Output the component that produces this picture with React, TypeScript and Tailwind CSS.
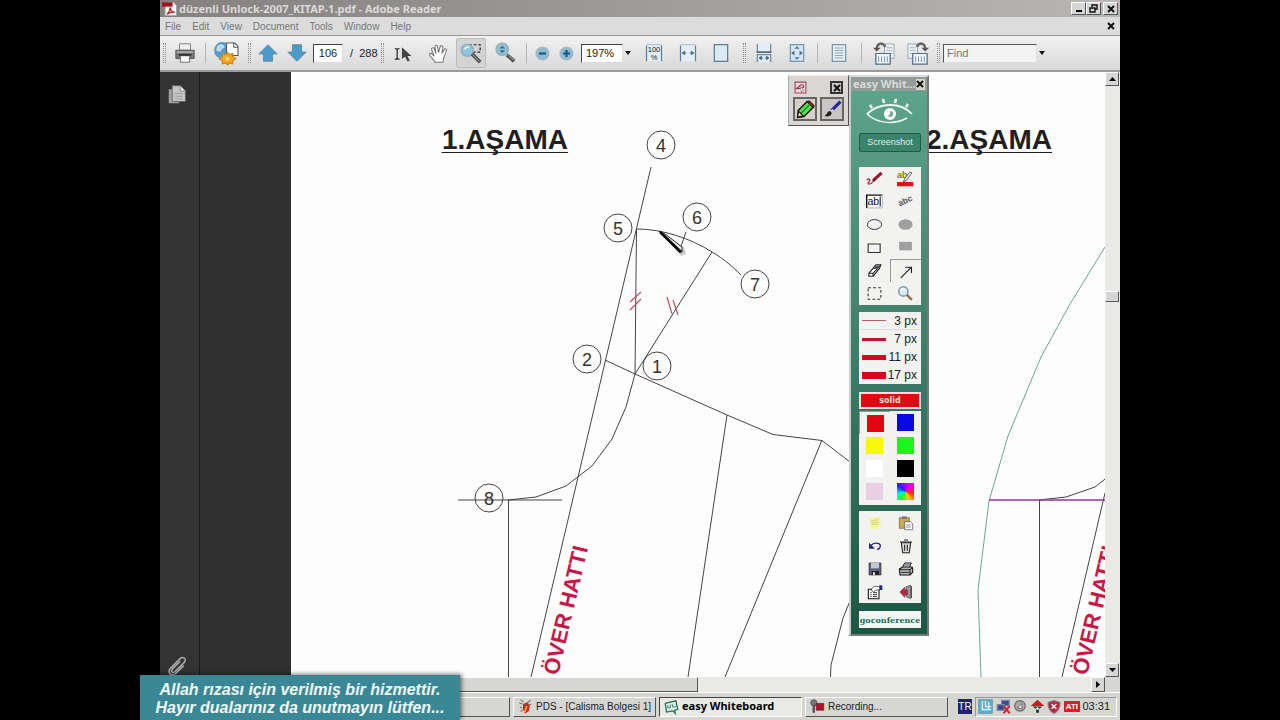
import React, { useState } from "react";

interface IconProps {
  name: string;
  size?: number;
}

const PageShape = () => (
  <>
    <path d="M3 2h18v20H3z" fill="#e3edf5" />
    <path d="M3 3v19M21 3v19" stroke="#5e7f9b" strokeWidth="1.5" />
    <path d="M3 2h18" stroke="#9fb0be" strokeWidth="1" />
  </>
);

const glyphs: Record<string, React.ReactNode> = {
  printer: (
    <>
      <path d="M6 2h12v7H6z" fill="#f2f2f2" stroke="#777" />
      <path d="M2 9h20v9H2z" fill="#777" stroke="#555" />
      <path d="M3 10h18v2H3z" fill="#aaa" />
      <path d="M7 15h10v7H7z" fill="#fff" stroke="#666" />
      <path d="M5 13h14v2H5z" fill="#333" />
    </>
  ),
  globe: (
    <>
      <circle cx="8" cy="9" r="8" fill="#5b9ac6" />
      <path d="M3 5c3-3 6-2 7 0s-3 2-3 4-4 1-5 0z" fill="#b9dcef" />
      <path d="M12 2h8l3 3v9H12z" fill="#fff" stroke="#555" />
      <path d="M19 2v4h4" fill="none" stroke="#555" />
      <path
        d="M13 11l2 2 3-1v3l3 2-3 2v3l-3-1-2 2-2-2-3 1v-3l-3-2 3-2v-3l3 1z"
        fill="#f2a922"
        stroke="#cf7f12"
      />
      <circle cx="13" cy="17" r="2" fill="#ffd56b" />
    </>
  ),
  up: <path d="M12 3l10 10h-5v8H7v-8H2z" fill="#4a9bca" stroke="#5f8ba8" />,
  down: <path d="M12 21L2 11h5V3h10v8h5z" fill="#4a9bca" stroke="#5f8ba8" />,
  cursor: (
    <>
      <path d="M1 6h2l1 1 1-1h2M4 7v11M1 19h2l1-1 1 1h2" fill="none" stroke="#222" strokeWidth="1.5" />
      <path d="M10 4v15l4-3 3 6 3-1-3-6h5z" fill="#444" />
    </>
  ),
  hand: (
    <path
      d="M8 22c-1-3-4-5-6-8-1-2 1-3 3-1l2 2-3-8c0-2 2-2 3-1l2 6-1-8c0-2 3-2 3 0l1 7 2-7c1-2 3-1 3 1l-1 7 3-5c1-1 3 0 2 2l-3 8-1 5z"
      fill="#fff"
      stroke="#777"
      strokeWidth="1.2"
    />
  ),
  marquee: (
    <>
      <path d="M10 3h12v8h-8" fill="none" stroke="#222" strokeWidth="1.3" strokeDasharray="3 2" />
      <circle cx="8" cy="9" r="6.500" fill="#8fc6da" stroke="#94b3c0" strokeWidth="2" />
      <path d="M5 8c1-2 3-3 5-2" fill="none" stroke="#e2f4fb" strokeWidth="2" />
      <path d="M13 13l9 9" stroke="#555" strokeWidth="4" />
      <path d="M14 14l7 7" stroke="#aaa" strokeWidth="1" />
    </>
  ),
  zoom: (
    <>
      <circle cx="9" cy="8" r="6.500" fill="#8fc0d6" stroke="#94b3c0" strokeWidth="2" />
      <path d="M6 7l3-3 3 3M6 9l3 3 3-3" fill="#376e8e" />
      <path d="M14 14l8 7" stroke="#555" strokeWidth="4" />
      <path d="M15 14l7 6" stroke="#aaa" strokeWidth="1" />
    </>
  ),
  minus: (
    <>
      <circle cx="12" cy="12" r="9" fill="#8bbbd5" stroke="#aab8c0" strokeWidth="2" />
      <path d="M7 12h10" stroke="#1f5378" strokeWidth="3" />
    </>
  ),
  plus: (
    <>
      <circle cx="12" cy="12" r="9" fill="#8bbbd5" stroke="#aab8c0" strokeWidth="2" />
      <path d="M7 12h10M12 7v10" stroke="#1f5378" strokeWidth="3" />
    </>
  ),
  percent: (
    <>
      <PageShape />
      <text x="12" y="11" textAnchor="middle" fontSize="9" fill="#222">100</text>
      <text x="12" y="20" textAnchor="middle" fontSize="9" fill="#222">%</text>
    </>
  ),
  width: (
    <>
      <PageShape />
      <path d="M5 12l3-2v4zM19 12l-3-2v4zM8 12h2M14 12h2" fill="#4c6377" stroke="#4c6377" />
    </>
  ),
  page: <path d="M4 2h16v20H4z" fill="#dceaf4" stroke="#5f7b91" strokeWidth="1.500" />,
  scroll: (
    <>
      <path d="M4 1v10h16V1" fill="#e3edf5" stroke="#7a8c9a" strokeWidth="1.5" />
      <path d="M4 23V14h16v9" fill="#e3edf5" stroke="#7a8c9a" strokeWidth="1.5" />
      <path d="M3 11h18" stroke="#4f6f8a" strokeWidth="2" />
      <path d="M6 18l3-2v4zM18 18l-3-2v4zM9 18h2M13 18h2" fill="#41678a" stroke="#41678a" />
    </>
  ),
  fit: (
    <>
      <path d="M4 2h16v20H4z" fill="#d3e6f3" stroke="#7798b1" strokeWidth="1.5" />
      <path d="M12 4l3 3H9zM12 20l3-3H9zM5 12l4-3v6zM19 12l-4-3v6z" fill="#4c6f8c" />
    </>
  ),
  doc: (
    <>
      <path d="M4 2h16v20H4z" fill="#e6eff6" stroke="#7798b1" strokeWidth="1.5" />
      <path d="M7 6h10M7 9h10M7 12h10M7 15h10M7 18h10" stroke="#8498a8" />
    </>
  ),
  rotateLeft: (
    <>
      <path d="M13 2h10v15H13z" fill="#edf1f5" stroke="#9aa6b1" />
      <path d="M15 6h6M15 9h6M15 12h6" stroke="#a5b0ba" />
      <path d="M4 12h15v11H4z" fill="#f0f5fa" stroke="#4e6c86" strokeWidth="1.3" />
      <path d="M7 15v6M10 15v6M13 15v6M16 15v6" stroke="#7f95a9" />
      <path d="M14 5C10-1 5 2 5 7" fill="none" stroke="#666" strokeWidth="2.5" />
      <path d="M1 6h8l-4 4z" fill="#555" />
    </>
  ),
  rotateRight: (
    <>
      <path d="M1 2h10v15H1z" fill="#edf1f5" stroke="#9aa6b1" />
      <path d="M3 6h6M3 9h6M3 12h6" stroke="#a5b0ba" />
      <path d="M6 12h15v11H6z" fill="#f0f5fa" stroke="#4e6c86" strokeWidth="1.3" />
      <path d="M9 15v6M12 15v6M15 15v6M18 15v6" stroke="#7f95a9" />
      <path d="M10 5c4-6 9-3 9 2" fill="none" stroke="#666" strokeWidth="2.5" />
      <path d="M23 6h-8l4 4z" fill="#555" />
    </>
  ),
  pdf: (
    <>
      <path d="M5 2h13l5 5v16H5z" fill="#fff" stroke="#999" />
      <path d="M0 2h17v7H0z" fill="#a4101c" />
      <path d="M8 21c3-3 5-7 5-11 0 5 3 8 8 8-5-1-9 0-13 3z" fill="none" stroke="#b8202b" strokeWidth="2" />
    </>
  ),
  pages: (
    <>
      <path d="M2 6h12v16H2z" fill="#a0a0a0" />
      <path d="M6 2h9l6 6v12H6z" fill="#c6c6c6" stroke="#666" />
      <path d="M15 2v6h6" fill="#e5e5e5" stroke="#888" />
      <path d="M9 11h9M9 14h9M9 17h9" stroke="#999" />
    </>
  ),
  clip: (
    <path
      d="M15 6L6 15c-2 3 1 5 3 3l11-11c3-4-2-7-5-4L4 14c-4 5 1 10 6 6l9-9"
      fill="none"
      stroke="#a8a8a8"
      strokeWidth="1.8"
    />
  ),
  greenPencil: (
    <>
      <path d="M2 22l1-9L14 2l8 7-12 12z" fill="#54e052" stroke="#111" strokeWidth="1.8" />
      <path d="M14 2l3-1 6 6-1 3z" fill="#b01717" stroke="#111" />
      <path d="M6 17L18 5" stroke="#138a1e" strokeWidth="1.5" />
      <path d="M2 22l1-8 6 6z" fill="#f4e28b" stroke="#111" strokeWidth="1.5" />
    </>
  ),
  bluePen: (
    <>
      <path d="M22 2L11 13" stroke="#27279b" strokeWidth="4" />
      <path d="M12 11l-4 4 2 2 4-4z" fill="#ccc" />
      <path d="M9 14c-4 0-3 4-7 6 4 2 9 0 9-4z" fill="#222" />
    </>
  ),
  record: (
    <>
      <path d="M2 2h20v20H2z" fill="#f3dce1" stroke="#a64157" strokeWidth="2" />
      <path d="M3 14c6 0 6-7 11-7s5 5 1 6-6 2-9 1" fill="none" stroke="#9c2440" strokeWidth="2" />
      <path d="M11 10l8 8-4 0-1 3z" fill="#fff" stroke="#555" />
    </>
  ),
  redPen: (
    <>
      <path d="M1 14c4-3 6 0 3 3s0 4 5 1" fill="none" stroke="#b5213a" strokeWidth="1.8" />
      <path d="M22 4L10 15" stroke="#9c1830" strokeWidth="4.500" />
      <path d="M11 12l-3 6 5-3z" fill="#621020" />
    </>
  ),
  highlighter: (
    <>
      <text x="0" y="11" fontSize="13" fontWeight="bold" fill="#7f7f08">ab</text>
      <path d="M21 4l-8 11-4 2 2-5 7-9z" fill="#eee" stroke="#333" />
      <path d="M0 17h23v6H0z" fill="#df1119" />
    </>
  ),
  textBox: (
    <>
      <path d="M1 3h22v18H1z" fill="#fff" />
      <path d="M1 21V3h22" fill="none" stroke="#111" strokeWidth="2" />
      <path d="M1 21h22V3" fill="none" stroke="#999" />
      <text x="2" y="17" fontSize="15" fill="#111">ab</text>
      <path d="M20 5v14" stroke="#111" strokeWidth="1.5" />
    </>
  ),
  abc: (
    <text x="12" y="15" textAnchor="middle" fontSize="12" fontWeight="bold" fill="#555" transform="rotate(-25 12 12)">
      abc
    </text>
  ),
  ellipse: <ellipse cx="12" cy="12" rx="10" ry="7" fill="none" stroke="#333" strokeWidth="1.4" />,
  ellipseFill: <ellipse cx="12" cy="12" rx="10" ry="7.500" fill="#a0a0a0" />,
  rect: <path d="M3 7h17v12H3z" fill="none" stroke="#333" strokeWidth="1.6" />,
  rectFill: <path d="M3 4h18v12H3z" fill="#a0a0a0" />,
  eraser: (
    <>
      <path d="M4 16L14 4h7l-2 5-9 11H4z" fill="#fff" stroke="#222" strokeWidth="1.5" />
      <path d="M4 16h6l11-12M10 16v4" fill="none" stroke="#222" strokeWidth="1.5" />
      <path d="M10 10h6l4-5h-6z" fill="#555" />
    </>
  ),
  arrow: <path d="M4 21L18 7M10 6h9v8" fill="none" stroke="#222" strokeWidth="1.6" />,
  select: <path d="M3 4h18v16H3z" fill="none" stroke="#333" strokeWidth="1.5" strokeDasharray="4 3" />,
  magnifier: (
    <>
      <circle cx="9" cy="9" r="6.500" fill="#d7ebf7" stroke="#7a93a7" strokeWidth="2" />
      <path d="M5 8c1-3 4-4 6-2" fill="none" stroke="#fff" strokeWidth="2" />
      <path d="M14 14l7 7" stroke="#97713e" strokeWidth="3.5" />
    </>
  ),
  note: (
    <>
      <path d="M3 5l16-3 2 17-15 3z" fill="#f5f3a5" />
      <path d="M6 9l11-2M7 12l11-2M7 15l11-2" stroke="#cdc968" strokeWidth="1.2" />
    </>
  ),
  paste: (
    <>
      <path d="M2 4h15v16H2z" fill="#c9a94e" stroke="#77602a" />
      <path d="M6 2h7v4H6z" fill="#777" />
      <path d="M10 10h9l3 3v9H10z" fill="#fff" stroke="#445" />
      <path d="M12 15h7M12 18h7" stroke="#557" />
    </>
  ),
  undo: (
    <>
      <path d="M6 11c4-5 13-4 14 0 0 4-2 6-5 6" fill="none" stroke="#26267e" strokeWidth="2" />
      <path d="M3 7v9h9z" fill="#26267e" />
    </>
  ),
  trash: (
    <>
      <path d="M5 7h14l-2 15H7z" fill="#ddd" stroke="#222" strokeWidth="1.6" />
      <path d="M3 6h18M9 3h6M10 10v9M14 10v9" stroke="#222" strokeWidth="1.6" />
    </>
  ),
  disk: (
    <>
      <path d="M3 3h18v18H3z" fill="#605f82" stroke="#333" />
      <path d="M6 3h12v8H6z" fill="#c3c7cf" />
      <path d="M7 15h11v6H7z" fill="#222" />
      <path d="M9 17h3v4H9z" fill="#ddd" />
    </>
  ),
  print: (
    <>
      <path d="M7 9l3-6h10l-3 6" fill="#fff" stroke="#111" strokeWidth="1.5" />
      <path d="M2 12l5-3h14l1 3v5l-4 4H3z" fill="#bbb" stroke="#111" strokeWidth="1.6" />
      <path d="M3 13h15l4-3M4 17h14M18 13v8" fill="none" stroke="#111" strokeWidth="1.3" />
      <path d="M10 5h8M9 7h8" stroke="#444" />
    </>
  ),
  properties: (
    <>
      <path d="M2 8h16v14H2z" fill="#fff" stroke="#111" strokeWidth="1.6" />
      <path d="M5 13h2M9 13h6M5 16h2M9 16h6M5 19h2M9 19h6" stroke="#333" strokeWidth="1.5" />
      <path d="M6 9c3-6 7-6 10-5l3-1v6h-6l-3 3z" fill="#fff" stroke="#111" />
      <path d="M19 2h4v7h-4z" fill="#26267e" />
    </>
  ),
  exit: (
    <>
      <path d="M12 4l7-2v20l-7-3z" fill="#999" stroke="#444" />
      <path d="M19 3h2v18h-2z" fill="#555" />
      <path d="M3 12l7-7v4h4v7h-4v4z" fill="#b52b43" stroke="#8b1a30" />
    </>
  ),
  pds: (
    <>
      <path d="M8 8l7-3 4 6-2 9-6 3-3-7z" fill="#cf2326" />
      <path d="M14 11l-3 10" fill="none" stroke="#f0c735" strokeWidth="2.500" />
      <path d="M4 1l5 4M20 2l-5 4M2 6l5 2M3 13l4 1M21 8l-3 2M4 20l4-3" stroke="#6a7f6a" strokeWidth="1.800" />
    </>
  ),
  board: (
    <>
      <path d="M2 7l17-4 3 14-5 1 1 5-4-4-10 2z" fill="#d9efe6" stroke="#2d6a56" strokeWidth="2" />
      <path d="M6 10v4h4v-5M13 8l1 5 5-1" fill="none" stroke="#3d816a" strokeWidth="1.5" />
    </>
  ),
  recording: (
    <>
      <circle cx="6" cy="6" r="5" fill="#777" stroke="#333" />
      <path d="M4 9h4v13H4z" fill="#555" />
      <path d="M10 7h12v11H10z" fill="#b1122b" stroke="#7e0c1d" />
    </>
  ),
  trayGrid: (
    <>
      <path d="M1 1h22v22H1z" fill="#62aecb" stroke="#4788a3" />
      <path d="M7 3v14h14M12 3v9h9M17 5v12" fill="none" stroke="#e5f6fc" strokeWidth="2" />
    </>
  ),
  trayNet: (
    <>
      <path d="M9 2h12v9H9z" fill="#3f4b87" stroke="#7b84ad" strokeWidth="2" />
      <path d="M2 9h11v9H2z" fill="#3f4b87" stroke="#7b84ad" strokeWidth="2" />
      <path d="M12 11l10 12M22 11L12 23" stroke="#d31f35" strokeWidth="3" />
    </>
  ),
  trayVolume: (
    <>
      <circle cx="12" cy="10" r="9" fill="#a8a8a8" stroke="#666" strokeWidth="2" />
      <path d="M8 13l7-7v9z" fill="#eee" stroke="#444" />
    </>
  ),
  trayUmbrella: (
    <>
      <path d="M1 11L12 1l11 10z" fill="#ce1b21" />
      <path d="M4 12h16l-6 4v6h-4v-6z" fill="#252525" />
      <circle cx="12" cy="15" r="2" fill="#fff" />
    </>
  ),
  trayShield: (
    <>
      <path d="M2 4l10-3 10 3c1 9-4 16-10 19C6 20 1 13 2 4z" fill="#b6243e" stroke="#8d7780" strokeWidth="2" />
      <path d="M8 7l8 8M16 7l-8 8" stroke="#fff" strokeWidth="2.500" />
    </>
  ),
};

const Icon = ({ name, size = 18 }: IconProps) => (
  <svg viewBox="0 0 24 24" width={size} height={size} className="shrink-0 overflow-visible" aria-hidden="true">
    {glyphs[name]}
  </svg>
);

const ToolButton = ({
  name,
  label,
  className,
  size = 22,
}: {
  name: string;
  label: string;
  className: string;
  size?: number;
}) => (
  <button aria-label={label} className={`flex h-[30px] shrink-0 items-center justify-center ${className}`}>
    <Icon name={name} size={size} />
  </button>
);

const Grip = () => (
  <div className="flex w-2 shrink-0 justify-center">
    <div className="h-5 w-[3px] border-x border-dotted border-[#8d8d8d]" />
  </div>
);

const Divider = () => (
  <div className="flex w-[6px] shrink-0 justify-center">
    <div className="h-5 w-px bg-[#b5b5b5]" />
  </div>
);

const DropArrow = ({ label }: { label: string }) => (
  <button aria-label={label} className="flex h-5 w-[10px] shrink-0 items-center justify-center">
    <svg width="6" height="4" viewBox="0 0 6 4" aria-hidden="true">
      <path d="M0 0h6L3 4z" fill="#111" />
    </svg>
  </button>
);

const CloseMark = () => (
  <svg width="8" height="8" viewBox="0 0 8 8" aria-hidden="true">
    <path d="M1 1l6 6M7 1L1 7" stroke="#111" strokeWidth="2" />
  </svg>
);

const raised = "border border-t-white border-l-white border-r-[#555] border-b-[#555] bg-[#d6d6d4]";
const sunken = "border border-t-[#444] border-l-[#444] border-r-[#ddd] border-b-[#ddd] bg-white";

const TitleBar = () => (
  <header className="flex h-[17px] shrink-0 items-center bg-linear-to-r from-[#858181] to-[#bab6b6] pr-[2px] pl-[2px]">
    <Icon name="pdf" size={15} />
    <h1 className="ml-[2px] flex-1 font-['Noto_Sans',sans-serif] text-[11px] leading-4 font-bold text-[#dcd9d9]">
      düzenli Unlock-2007_KITAP-1.pdf - Adobe Reader
    </h1>
    <button aria-label="Minimize" className={`flex h-[13px] w-[15px] items-end justify-center pb-[2px] ${raised}`}>
      <span className="h-[2px] w-[6px] bg-black" />
    </button>
    <button aria-label="Restore" className={`flex h-[13px] w-[15px] items-center justify-center ${raised}`}>
      <svg width="9" height="9" viewBox="0 0 9 9" aria-hidden="true">
        <path d="M3 3V1h5v4H6M1 4h5v4H1zM3 1h5M1 4h5" fill="none" stroke="#111" strokeWidth="1.4" />
      </svg>
    </button>
    <button aria-label="Close" className={`ml-[2px] flex h-[13px] w-[15px] items-center justify-center ${raised}`}>
      <CloseMark />
    </button>
  </header>
);

const menus = ["File", "Edit", "View", "Document", "Tools", "Window", "Help"];

const MenuBar = () => (
  <nav className="flex h-[19px] shrink-0 items-center gap-[11px] border-b border-[#999] bg-[#dcdcdc] pr-[5px] pl-[5px] text-[10px] text-[#777]">
    {menus.map((m) => (
      <button key={m}>{m}</button>
    ))}
    <button aria-label="Close document" className="ml-auto">
      <CloseMark />
    </button>
  </nav>
);

const Toolbar = () => {
  const [page, setPage] = useState("106");
  const [zoom, setZoom] = useState("197%");

  return (
    <div className="flex h-9 shrink-0 items-center overflow-hidden border-b-2 border-[#9b9b9b] bg-linear-to-b from-[#f1f1f1] to-[#d9d9d9] text-[11px] text-[#222]">
      <Grip />
      <ToolButton name="printer" label="Print" className="w-[34px]" />
      <Divider />
      <ToolButton name="globe" label="Collaborate" className="w-[37px]" size={25} />
      <Grip />
      <ToolButton name="up" label="Previous page" className="w-[30px]" />
      <ToolButton name="down" label="Next page" className="w-[27px]" />
      <input
        aria-label="Page"
        value={page}
        onChange={(e) => setPage(e.target.value)}
        className={`ml-[3px] h-[19px] w-[30px] shrink-0 text-center ${sunken}`}
      />
      <span className="w-[35px] shrink-0 pl-[7px] whitespace-pre">/  288</span>
      <Grip />
      <ToolButton name="cursor" label="Select" className="w-[34px]" size={19} />
      <ToolButton name="hand" label="Hand" className="w-9" size={21} />
      <ToolButton
        name="marquee"
        label="Marquee zoom"
        className="w-[30px] rounded-[2px] border border-[#bdbdbd] bg-[#d4d4d4]"
      />
      <ToolButton name="zoom" label="Dynamic zoom" className="w-[37px]" />
      <Divider />
      <ToolButton name="minus" label="Zoom out" className="w-[26px]" size={17} />
      <ToolButton name="plus" label="Zoom in" className="w-[22px]" size={17} />
      <input
        aria-label="Zoom"
        value={zoom}
        onChange={(e) => setZoom(e.target.value)}
        className={`ml-1 h-[19px] w-[42px] shrink-0 pl-1 ${sunken}`}
      />
      <DropArrow label="Zoom levels" />
      <ToolButton name="percent" label="Actual size" className="w-[42px]" size={20} />
      <ToolButton name="width" label="Fit width" className="w-[26px]" size={20} />
      <ToolButton name="page" label="Single page" className="w-[39px]" size={20} />
      <Grip />
      <ToolButton name="scroll" label="Scrolling" className="w-[32px]" size={20} />
      <ToolButton name="fit" label="Fit page" className="w-[34px]" size={20} />
      <Divider />
      <ToolButton name="doc" label="Reading" className="w-[38px]" size={20} />
      <Divider />
      <ToolButton name="rotateLeft" label="Rotate left" className="w-[38px]" size={23} />
      <ToolButton name="rotateRight" label="Rotate right" className="w-8" size={23} />
      <Grip />
      <input
        aria-label="Find"
        placeholder="Find"
        className="ml-px h-[19px] w-[94px] shrink-0 border border-t-[#555] border-r-[#ddd] border-b-[#ddd] border-l-[#555] bg-[#f3f3f3] pl-[3px] placeholder:text-[#777]"
      />
      <DropArrow label="Find options" />
    </div>
  );
};

const points = [
  { n: 4, x: 661, y: 145 },
  { n: 5, x: 618, y: 228 },
  { n: 6, x: 697, y: 217 },
  { n: 7, x: 755, y: 284 },
  { n: 2, x: 587, y: 359 },
  { n: 1, x: 657, y: 366 },
  { n: 8, x: 489, y: 498 },
];

const Pattern = () => (
  <svg
    viewBox="291 72 814 605"
    preserveAspectRatio="xMinYMin slice"
    className="absolute inset-0 h-full w-full font-['Liberation_Sans',Arial,sans-serif]"
  >
    <g fontSize="28" fontWeight="bold" fill="#231f20">
      <text x="442" y="149">1.AŞAMA</text>
      <text x="926" y="149">2.AŞAMA</text>
      <path d="M441.500 152.500H568M925 152.500H1052" stroke="#231f20" />
    </g>
    <g fill="none" stroke="#444">
      <path d="M651 167L531 677" />
      <path d="M636.500 229L635 374L712 252" />
      <path d="M637 229C662 229 690 238 712 252C724 259 733 267 741 275" />
      <path d="M605 360L635 374L727 415L773 434.500L822 440.500L850 462" />
      <path d="M635 374L626 407L612 439L592 466L566 486L536 497L508 500" />
      <path d="M458 500H562M508.500 500V677" />
      <path d="M727 415L688 677M822 440L725 677" />
      <path d="M850 601L843 618L831 665L830.500 677" />
      <path d="M1039.500 500V677M1039 500L1066 497L1095 487L1105 479" />
      <path d="M1105 493L1062 677" />
      <path d="M686 232L681 246" />
    </g>
    <path d="M1105 247L1070 304L1041 357L1008 436L989 501L978 590L981 677" fill="none" stroke="#6fa398" />
    <path d="M989 500H1105" stroke="#93369a" strokeWidth="1.500" />
    <path
      d="M630 302L641 292M630 310L641 299M667 297L672 314M673 300L678 315"
      stroke="#c0506a"
      strokeWidth="1.200"
    />
    <g fontSize="22" fontWeight="bold" fill="#cb1645">
      <text transform="translate(558 676) rotate(-76.800)">ÖVER HATTI</text>
      <text transform="translate(1087 676) rotate(-76.800)">ÖVER HATTI</text>
    </g>
    {points.map((p) => (
      <g key={p.n}>
        <circle cx={p.x} cy={p.y} r="14" fill="none" stroke="#444" />
        <text x={p.x} y={p.y + 7} textAnchor="middle" fontSize="18" fill="#333">
          {p.n}
        </text>
      </g>
    ))}
    {/* pen cursor */}
    <path d="M661 234L684 247L686 254L681 256Z" fill="#ccc" />
    <path d="M659 231L665 234L682 247V252H679Z" fill="#eee" stroke="#222" />
    <path d="M660 232L681 252" stroke="#000" strokeWidth="2.500" />
  </svg>
);

const VerticalScroll = () => (
  <div className="flex w-[15px] shrink-0 flex-col items-stretch bg-[#e9e9e7] pr-px">
    <button aria-label="Scroll up" className={`flex h-[14px] items-center justify-center ${raised}`}>
      <svg width="7" height="4" viewBox="0 0 7 4" aria-hidden="true">
        <path d="M0 4h7L3.500 0z" />
      </svg>
    </button>
    <div className="flex-[205]" />
    <div className={`h-[11px] ${raised}`} />
    <div className="flex-[361]" />
    <button aria-label="Scroll down" className={`flex h-[14px] items-center justify-center ${raised}`}>
      <svg width="7" height="4" viewBox="0 0 7 4" aria-hidden="true">
        <path d="M0 0h7L3.500 4z" />
      </svg>
    </button>
  </div>
);

const MiniToolbar = () => (
  <div className="absolute top-[3px] left-[628px] w-[61px] border border-t-[#eee] border-r-[#555] border-b-[#555] border-l-[#aaa] bg-[#dad6d3] px-1 pt-[5px] pb-1">
    <div className="mb-[3px] flex items-center justify-between px-px">
      <Icon name="record" size={13} />
      <button
        aria-label="Close tools"
        className="flex h-[13px] w-[13px] items-center justify-center border-2 border-[#333] bg-[#c8c8c8]"
      >
        <CloseMark />
      </button>
    </div>
    <div className="flex justify-between">
      <button aria-label="Marker" className="flex h-6 w-6 items-center justify-center border-2 border-[#666] bg-[#d6cfc9]">
        <Icon name="greenPencil" size={19} />
      </button>
      <button aria-label="Brush" className="flex h-6 w-6 items-center justify-center border-2 border-[#666] bg-[#c9c5c3]">
        <Icon name="bluePen" size={19} />
      </button>
    </div>
  </div>
);

const drawTools = [
  "redPen", "highlighter", "textBox", "abc", "ellipse", "ellipseFill",
  "rect", "rectFill", "eraser", "arrow", "select", "magnifier",
];
const actions = ["note", "paste", "undo", "trash", "disk", "print", "properties", "exit"];
const widths = [
  { label: "3 px", bar: "h-px bg-[#b5606c]" },
  { label: "7 px", bar: "h-[3px] bg-[#c8102e]" },
  { label: "11 px", bar: "h-[5px] bg-[#d3091f]" },
  { label: "17 px", bar: "h-[7px] bg-[#d3091f]" },
];
const colors = [
  "bg-[#e3050f]", "bg-[#0a0ae0]", "bg-[#f8f80a]", "bg-[#1cf51c]",
  "bg-white", "bg-black", "bg-[#e8cfe4]",
  "bg-[conic-gradient(#a0f,#f0c,#f22,#fc0,#2f2,#0ef,#22f,#a0f)]",
];

const EasyWhiteboard = () => {
  const [tool, setTool] = useState("arrow");
  const [color, setColor] = useState(0);
  const [width, setWidth] = useState(0);

  return (
    <section className="absolute top-[3px] left-[689px] w-20 border-2 border-t-[#ddd] border-r-[#777] border-b-[#777] border-l-[#ccc] bg-linear-to-b from-[#5fa58e] to-[#1c5746] pb-[6px]">
      <div className="flex h-[14px] items-center justify-between bg-[#929b97] pr-[3px] pl-[2px]">
        <h2 className="font-['Noto_Sans',sans-serif] text-[11px] leading-[14px] font-bold whitespace-nowrap text-[#d5dcd8]">
          easy Whit...
        </h2>
        <button
          aria-label="Close whiteboard"
          className="flex h-[11px] w-[9px] shrink-0 items-center justify-center bg-[#d6d6c8]"
        >
          <CloseMark />
        </button>
      </div>
      <div className="flex flex-col pr-[6px] pl-2">
        <svg viewBox="0 0 48 28" className="mx-auto mt-[7px] h-7 w-12" aria-hidden="true">
          <path d="M1 16C12 5 34 3 46 16" fill="none" stroke="#eefaf5" strokeWidth="1.800" />
          <path d="M1 16C13 27 30 26 41 20" fill="none" stroke="#eefaf5" strokeWidth="1.500" />
          <circle cx="24" cy="16" r="6" fill="#fff" />
          <path d="M24 13a3 3 0 1 1-2 5l2-2z" fill="#75a996" />
          <path d="M4 7l2 3M17 1l1 4M30 1l-1 4M42 6l-2 3" stroke="#fff" strokeWidth="2.500" />
        </svg>
        <button className="mt-[7px] h-[19px] rounded-[2px] border border-[#1f5a49] bg-[#3b826b] text-[9px] leading-none text-[#dcefe7]">
          Screenshot
        </button>
        <div className="mt-[15px] grid grid-cols-2 bg-[#f2f2f1]">
          {drawTools.map((t) => (
            <button
              key={t}
              aria-label={t}
              onClick={() => setTool(t)}
              className={`flex h-[23px] items-center justify-center ${
                tool === t ? "border-t border-l border-[#999]" : ""
              }`}
            >
              <Icon name={t} size={17} />
            </button>
          ))}
        </div>
        <div className="mt-[7px] bg-[#f2f2f1] text-[12px] text-[#222]">
          {widths.map((w, i) => (
            <button
              key={w.label}
              onClick={() => setWidth(i)}
              className={`flex h-[18px] w-full items-center justify-between pr-1 pl-[3px] whitespace-nowrap ${
                width === i ? "border-b border-[#ddd]" : ""
              }`}
            >
              <span className={`w-6 shrink-0 ${w.bar}`} />
              {w.label}
            </button>
          ))}
        </div>
        <button className="mt-2 h-[17px] border-2 border-[#f3e3dc] bg-[#df0a14] font-['DejaVu_Sans',sans-serif] text-[8px] leading-none font-bold text-[#f9dcdc]">
          solid
        </button>
        <div className="mt-[2px] grid grid-cols-2 bg-[#f2f2f1] pb-[2px]">
          {colors.map((c, i) => (
            <button
              key={c}
              aria-label={`Color ${i + 1}`}
              onClick={() => setColor(i)}
              className={`flex h-[23px] items-center justify-center ${
                color === i ? "border-t border-l border-[#999]" : ""
              }`}
            >
              <span className={`h-[17px] w-[17px] ${c}`} />
            </button>
          ))}
        </div>
        <div className="mt-[6px] grid grid-cols-2 bg-[#f2f2f1]">
          {actions.map((a) => (
            <button key={a} aria-label={a} className="flex h-[23px] items-center justify-center">
              <Icon name={a} size={16} />
            </button>
          ))}
        </div>
        <a
          href="#goconference"
          className="mt-2 flex h-[17px] items-center justify-center bg-[#f2f5f3] font-['DejaVu_Serif',serif] text-[8px] font-bold text-[#1f6b52]"
        >
          goconference
        </a>
      </div>
    </section>
  );
};

const HorizontalScroll = () => (
  <div className="flex h-[15px] shrink-0 bg-[#e9e9e5]">
    <div className={`flex-[537] ${raised}`} />
    <div className="flex-[394]" />
    <button aria-label="Scroll right" className={`flex w-[14px] items-center justify-center ${raised}`}>
      <svg width="4" height="7" viewBox="0 0 4 7" aria-hidden="true">
        <path d="M0 0v7l4-3.500z" />
      </svg>
    </button>
    <div className="w-[15px] bg-[#d6d6d4]" />
  </div>
);

const TaskBar = () => (
  <footer className="flex h-7 shrink-0 items-center gap-[3px] border-t border-white bg-[#d6d6d0] pr-[3px] text-[10px] text-[#222]">
    <button aria-label="Adobe Reader" className={`h-5 w-[350px] ${raised}`} />
    <button className={`flex h-5 w-[143px] items-center gap-[3px] px-1 whitespace-nowrap ${raised}`}>
      <Icon name="pds" size={15} />
      PDS - [Calisma Bolgesi 1]
    </button>
    <button className="flex h-5 w-[143px] items-center gap-[3px] border border-t-[#444] border-r-white border-b-white border-l-[#444] bg-[#e9e9e5] px-1 font-['Noto_Sans',sans-serif] text-[11px] font-bold whitespace-nowrap text-black">
      <Icon name="board" size={15} />
      easy Whiteboard
    </button>
    <button className={`flex h-5 w-[143px] items-center gap-[3px] px-1 whitespace-nowrap ${raised}`}>
      <Icon name="recording" size={15} />
      Recording...
    </button>
    <div className="ml-auto flex h-[15px] w-[14px] shrink-0 items-center justify-center bg-[#1c2370] text-white">
      TR
    </div>
    <div className="flex h-5 w-[142px] shrink-0 items-center justify-between border border-t-[#999] border-r-white border-b-white border-l-[#999] pr-[6px] pl-[2px]">
      <Icon name="trayGrid" size={15} />
      <Icon name="trayNet" size={15} />
      <Icon name="trayVolume" size={14} />
      <Icon name="trayUmbrella" size={15} />
      <Icon name="trayShield" size={14} />
      <span className="flex h-[11px] w-4 items-center justify-center bg-[#d8202b] text-[8px] font-bold text-white">
        ATI
      </span>
      <time className="text-[11px]">03:31</time>
    </div>
  </footer>
);

const App: React.FC = () => {
  return (
    <div className="relative h-screen overflow-hidden bg-black px-40 font-['Liberation_Sans',Arial,sans-serif]">
      <div className="flex h-full flex-col">
        <TitleBar />
        <MenuBar />
        <Toolbar />
        <main className="relative flex min-h-0 flex-1">
          <aside className="flex w-10 shrink-0 flex-col items-center justify-between border-r border-[#1b1b1b] bg-[#333] pt-3 pr-[5px]">
            <button aria-label="Pages">
              <Icon name="pages" size={21} />
            </button>
            <button aria-label="Attachments">
              <Icon name="clip" size={21} />
            </button>
          </aside>
          <div className="w-[91px] shrink-0 bg-[#303030]" />
          <article className="relative flex-1 overflow-hidden bg-[#fdfdfd]">
            <Pattern />
          </article>
          <VerticalScroll />
          <MiniToolbar />
          <EasyWhiteboard />
        </main>
        <HorizontalScroll />
        <TaskBar />
      </div>
      <p className="absolute bottom-0 left-[140px] w-80 bg-[#3a8796] pt-[6px] pb-[3px] text-center text-[16px] leading-[18px] font-bold text-[#f1fafb] italic shadow-[2px_-1px_4px_rgba(0,0,0,0.5)]">
        Allah rızası için verilmiş bir hizmettir.
        <br />
        Hayır dualarınız da unutmayın lütfen...
      </p>
    </div>
  );
};

export default App;
